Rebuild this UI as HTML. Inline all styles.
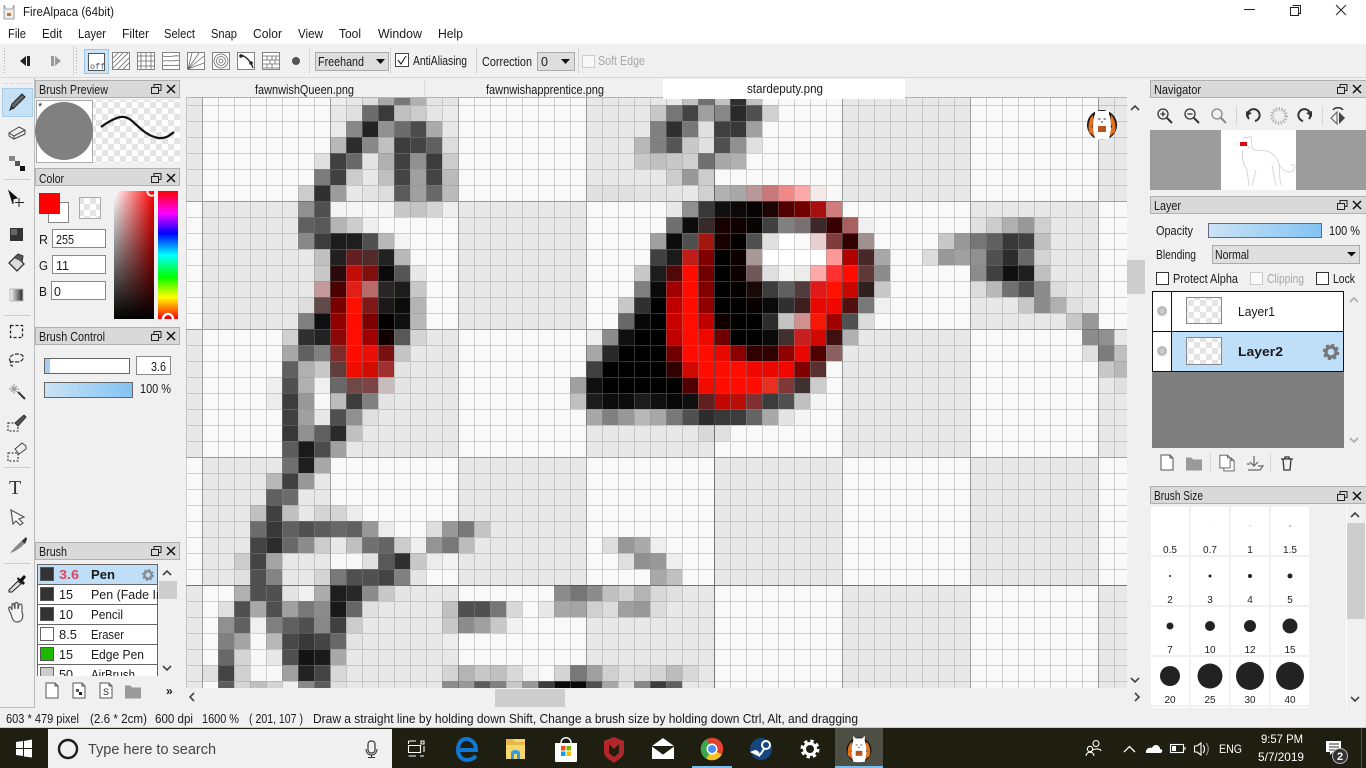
<!DOCTYPE html>
<html><head><meta charset="utf-8"><title>FireAlpaca</title>
<style>
html,body{margin:0;padding:0;width:1366px;height:768px;overflow:hidden;background:#f0f0f0}
svg{display:block;position:absolute;left:0;top:0}
text{font-family:"Liberation Sans",sans-serif;font-size:12.5px;fill:#1a1a1a;white-space:pre}
#c rect{width:16px;height:16px}
.h{fill:#d9d9d9;stroke:#b0b0b0}
.g text,text.g{fill:#a8a8a8}
.ln{stroke:#333;fill:none}
.mn{font-size:10px;fill:#222}
</style></head><body>
<svg width="1366" height="768" viewBox="0 0 1366 768" xmlns="http://www.w3.org/2000/svg">
<defs>
<pattern id="bgp" patternUnits="userSpaceOnUse" x="202" y="201" width="256" height="256"><rect width="256" height="256" fill="#f9f9f9"/><rect width="128" height="128" fill="#e8e8e8"/><rect x="128" y="128" width="128" height="128" fill="#e8e8e8"/></pattern>
<pattern id="gmin" patternUnits="userSpaceOnUse" x="202" y="201" width="16" height="16"><rect width="1" height="16" fill="#8c8c8c" fill-opacity=".38"/><rect x="1" width="15" height="1" fill="#8c8c8c" fill-opacity=".38"/></pattern>
<pattern id="gmaj" patternUnits="userSpaceOnUse" x="202" y="201" width="128" height="128"><rect width="1" height="128" fill="#b0b0b0"/><rect x="1" width="127" height="1" fill="#b0b0b0"/></pattern>
<pattern id="ck" patternUnits="userSpaceOnUse" width="12" height="12"><rect width="12" height="12" fill="#fff"/><rect width="6" height="6" fill="#e4e4e4"/><rect x="6" y="6" width="6" height="6" fill="#e4e4e4"/></pattern>
<linearGradient id="op" x1="0" x2="1" y1="0" y2="0"><stop offset="0" stop-color="#cbe3f5"/><stop offset="1" stop-color="#82c3f3"/></linearGradient>
<linearGradient id="hue" x1="0" x2="0" y1="0" y2="1"><stop offset="0" stop-color="#f00"/><stop offset=".17" stop-color="#f0f"/><stop offset=".33" stop-color="#00f"/><stop offset=".5" stop-color="#0ff"/><stop offset=".67" stop-color="#0f0"/><stop offset=".83" stop-color="#ff0"/><stop offset="1" stop-color="#f00"/></linearGradient>
<linearGradient id="sw" x1="0" x2="1" y1="0" y2="0"><stop offset="0" stop-color="#fff"/><stop offset="1" stop-color="#f00"/></linearGradient>
<linearGradient id="sb" x1="0" x2="0" y1="0" y2="1"><stop offset="0" stop-color="#000" stop-opacity="0"/><stop offset="1" stop-color="#000"/></linearGradient>
<linearGradient id="gd" x1="0" x2="1" y1="0" y2="0"><stop offset="0" stop-color="#fff"/><stop offset="1" stop-color="#222"/></linearGradient>
<clipPath id="cv"><rect x="186" y="98" width="941" height="590"/></clipPath>
<clipPath id="bl"><rect x="37" y="564" width="121" height="112"/></clipPath>
<g id="rs"><rect x="3" y=".5" width="7" height="6" fill="none" stroke="#222"/><rect x=".5" y="3.5" width="7" height="6" fill="#d9d9d9" stroke="#222"/></g>
<path id="xx" d="M0 0L8 8M8 0L0 8" stroke="#111" stroke-width="1.5" fill="none"/>
<g id="gear"><circle r="5" fill="none" stroke="#777" stroke-width="3.2"/><circle r="7" fill="none" stroke="#777" stroke-width="2.6" stroke-dasharray="3 2.5"/></g>
<path id="up" d="M-4 2L0-2L4 2" fill="none" stroke="#444" stroke-width="1.6"/>
<path id="dn" d="M-4-2L0 2L4-2" fill="none" stroke="#444" stroke-width="1.6"/>
<g id="lg"><circle r="15" fill="#111"/><path d="M-13 7C-15-2-11-9-9-10L-8-3L-10 2L-7 5L-7 12ZM13 7C15-2 11-9 9-10L8-3L10 2L7 5L7 12Z" fill="#e2701c"/><path d="M-7 14L-9 4C-9-4-8-9-7-11L-7-17L-4-14H4L7-17L7-11C8-9 9-4 9 4L7 14C3 15-3 15-7 14Z" fill="#fff"/><rect x="-4" y="1" width="8" height="6" fill="#b3561f"/><path d="M-4-6h2.500M1.500-6h2.500M-1 -3h2" stroke="#333"/></g>
<g id="doc"><path d="M-6-8H3L6-5V7H-6Z" fill="#fff" stroke="#555"/><path d="M3-8V-5H6" fill="none" stroke="#555"/></g>
<path id="fold" d="M-7.500-6H-3L-1-4H7.500V6H-7.500Z" fill="#9a9a9a" stroke="#999"/>
</defs>

<!-- title + menu -->
<rect width="1366" height="44" fill="#fff"/>
<g transform="translate(9 12)"><path d="M-5-7L-3-3L3-3L5-7L5 7L-5 7Z" fill="#eee" stroke="#888" stroke-width=".8"/><rect x="-2" y="1" width="4" height="3" fill="#d3792d"/></g>
<text x="23" y="16" textLength="91" lengthAdjust="spacingAndGlyphs">FireAlpaca (64bit)</text>
<rect x="1244" y="9" width="11" height="1" fill="#222"/>
<g fill="none" stroke="#222"><rect x="1290.5" y="7.5" width="8" height="8" fill="#fff"/><path d="M1292.5 5.5H1300.5V13.5H1298.5"/><path d="M1336 5L1346 15M1346 5L1336 15"/></g>
<g>
<text x="8" y="38" textLength="18" lengthAdjust="spacingAndGlyphs">File</text>
<text x="42" y="38" textLength="20" lengthAdjust="spacingAndGlyphs">Edit</text>
<text x="78" y="38" textLength="28" lengthAdjust="spacingAndGlyphs">Layer</text>
<text x="122" y="38" textLength="27" lengthAdjust="spacingAndGlyphs">Filter</text>
<text x="164" y="38" textLength="31" lengthAdjust="spacingAndGlyphs">Select</text>
<text x="211" y="38" textLength="26" lengthAdjust="spacingAndGlyphs">Snap</text>
<text x="253" y="38" textLength="29" lengthAdjust="spacingAndGlyphs">Color</text>
<text x="298" y="38" textLength="25" lengthAdjust="spacingAndGlyphs">View</text>
<text x="339" y="38" textLength="22" lengthAdjust="spacingAndGlyphs">Tool</text>
<text x="378" y="38" textLength="44" lengthAdjust="spacingAndGlyphs">Window</text>
<text x="438" y="38" textLength="25" lengthAdjust="spacingAndGlyphs">Help</text>
</g>

<!-- toolbar -->
<rect y="44" width="1366" height="34" fill="#f0f0f0"/>
<rect y="77" width="1366" height="1" fill="#d8d8d8"/>
<path d="M4.5 48V74M76.5 48V74" stroke="#aaa" stroke-dasharray="1 2"/>
<path d="M73.5 46V76M309.5 48V74M390.5 48V74M476.5 48V74M578.5 48V74" stroke="#d4d4d4"/>
<path d="M26 56V66L20 61ZM27 56H30V66H27Z" fill="#222"/>
<path d="M51 56H54V66H51ZM55 56L61 61L55 66Z" fill="#999"/>
<rect x="84.5" y="49.5" width="24" height="24" fill="#cce4f7" stroke="#9cc5e8"/>
<rect x="88.5" y="53.5" width="16" height="17" fill="#fff" stroke="#555"/>
<text x="90" y="69" style="font-family:'Liberation Mono',monospace;font-size:8.5px;fill:#456">off</text>
<g stroke="#666" fill="#fff" stroke-width=".8">
<rect x="112.5" y="52.5" width="17" height="17"/><path d="M113 58L118 53M113 63L123 53M113 68L128 53M118 69L129 58M123 69L129 63" fill="none"/>
<rect x="137.5" y="52.5" width="17" height="17"/><path d="M141 53V69M146 53V69M151 53V69M138 56H154M138 61H154M138 66H154" fill="none"/>
<rect x="162.5" y="52.5" width="17" height="17"/><path d="M163 56C168 58 174 55 179 56M163 61C168 60 174 62 179 60M163 66C168 64 174 67 179 65" fill="none"/>
<rect x="187.5" y="52.5" width="17" height="17"/><path d="M188 69L192 53M188 69L199 53M188 69L204 56M188 69L204 63" fill="none"/>
<rect x="212.5" y="52.5" width="17" height="17"/><circle cx="221" cy="61" r="7" fill="none"/><circle cx="221" cy="61" r="4.5" fill="none"/><circle cx="221" cy="61" r="2" fill="none"/>
<rect x="237.5" y="52.5" width="17" height="17"/>
<rect x="262.5" y="52.5" width="17" height="17"/><path d="M263 56H279M263 60H279M263 64H279M263 68H279M267 56V60M272 56V60M276 56V60M270 60V64M275 60V64M267 64V68M272 64V68" fill="none"/>
</g>
<path d="M240 55C246 56 250 60 253 68" fill="none" stroke="#333" stroke-width="1.4"/><circle cx="241" cy="56" r="1.8" fill="#222"/><circle cx="251" cy="63" r="1.8" fill="#222"/>
<circle cx="296" cy="61" r="4" fill="#555"/>
<rect x="315.5" y="52.5" width="73" height="18" fill="#dedede" stroke="#aaa"/>
<text x="318" y="66" textLength="46" lengthAdjust="spacingAndGlyphs">Freehand</text>
<path d="M376 59H385L380.500 64Z" fill="#111"/>
<rect x="395.5" y="53.5" width="13" height="13" fill="#fff" stroke="#444"/><path d="M398 60L401 64L406 56" fill="none" stroke="#222" stroke-width="1.1"/>
<text x="413" y="65" textLength="54" lengthAdjust="spacingAndGlyphs">AntiAliasing</text>
<text x="482" y="66" textLength="50" lengthAdjust="spacingAndGlyphs">Correction</text>
<rect x="537.500" y="52.5" width="37" height="18" fill="#dedede" stroke="#aaa"/>
<text x="541" y="66">0</text>
<path d="M561 59H570L565.500 64Z" fill="#111"/>
<rect x="582.500" y="55.5" width="12" height="12" fill="#f8f8f8" stroke="#ccc"/>
<text class="g" x="598" y="65" textLength="47" lengthAdjust="spacingAndGlyphs">Soft Edge</text>

<!-- canvas -->
<g clip-path="url(#cv)">
<rect x="186" y="98" width="941" height="590" fill="url(#bgp)"/>
<g id="c">
<g transform="translate(0 89)"><rect x="330" fill="#eeeeee"/><rect x="346" fill="#e8e8e8"/><rect x="362" fill="#dddddd"/><rect x="378" fill="#a8a8a8"/><rect x="394" fill="#777777"/><rect x="410" fill="#b0b0b0"/><rect x="426" fill="#e5e5e5"/><rect x="442" fill="#e5e5e5"/><rect x="682" fill="#c0c0c0"/><rect x="698" fill="#707070"/><rect x="714" fill="#c0c0c0"/><rect x="730" fill="#303030"/><rect x="746" fill="#c0c0c0"/></g>
<g transform="translate(0 105)"><rect x="330" fill="#e8e8e8"/><rect x="346" fill="#e0e0e0"/><rect x="362" fill="#6c6c6c"/><rect x="378" fill="#3a3a3a"/><rect x="394" fill="#c0c0c0"/><rect x="410" fill="#cccccc"/><rect x="426" fill="#e5e5e5"/><rect x="442" fill="#ebebeb"/><rect x="650" fill="#c8c8c8"/><rect x="666" fill="#777777"/><rect x="682" fill="#444444"/><rect x="698" fill="#a0a0a0"/><rect x="714" fill="#888888"/><rect x="730" fill="#2a2a2a"/><rect x="746" fill="#505050"/><rect x="762" fill="#d0d0d0"/></g>
<g transform="translate(0 121)"><rect x="330" fill="#eaeaea"/><rect x="346" fill="#888888"/><rect x="362" fill="#222222"/><rect x="378" fill="#909090"/><rect x="394" fill="#6c6c6c"/><rect x="410" fill="#4c4c4c"/><rect x="426" fill="#aaaaaa"/><rect x="442" fill="#e8e8e8"/><rect x="650" fill="#808080"/><rect x="666" fill="#303030"/><rect x="682" fill="#777777"/><rect x="698" fill="#e0e0e0"/><rect x="714" fill="#404040"/><rect x="730" fill="#383838"/><rect x="746" fill="#a0a0a0"/></g>
<g transform="translate(0 137)"><rect x="330" fill="#b8b8b8"/><rect x="346" fill="#2c2c2c"/><rect x="362" fill="#888888"/><rect x="378" fill="#c0c0c0"/><rect x="394" fill="#3c3c3c"/><rect x="410" fill="#444444"/><rect x="426" fill="#606060"/><rect x="442" fill="#dddddd"/><rect x="634" fill="#b8b8b8"/><rect x="650" fill="#808080"/><rect x="666" fill="#555555"/><rect x="682" fill="#c8c8c8"/><rect x="698" fill="#e0e0e0"/><rect x="714" fill="#505050"/><rect x="730" fill="#909090"/><rect x="746" fill="#e0e0e0"/></g>
<g transform="translate(0 153)"><rect x="314" fill="#e0e0e0"/><rect x="330" fill="#404040"/><rect x="346" fill="#686868"/><rect x="362" fill="#e4e4e4"/><rect x="378" fill="#b0b0b0"/><rect x="394" fill="#404040"/><rect x="410" fill="#909090"/><rect x="426" fill="#3c3c3c"/><rect x="442" fill="#cccccc"/><rect x="634" fill="#c8c8c8"/><rect x="650" fill="#c0c0c0"/><rect x="666" fill="#c8c8c8"/><rect x="682" fill="#d0d0d0"/><rect x="698" fill="#707070"/><rect x="714" fill="#a8a8a8"/><rect x="730" fill="#b0b0b0"/></g>
<g transform="translate(0 169)"><rect x="314" fill="#7c7c7c"/><rect x="330" fill="#404040"/><rect x="346" fill="#cccccc"/><rect x="362" fill="#e8e8e8"/><rect x="378" fill="#bfbfbf"/><rect x="394" fill="#444444"/><rect x="410" fill="#a0a0a0"/><rect x="426" fill="#444444"/><rect x="442" fill="#bbbbbb"/><rect x="666" fill="#cccccc"/><rect x="682" fill="#989898"/><rect x="698" fill="#cccccc"/></g>
<g transform="translate(0 185)"><rect x="298" fill="#cccccc"/><rect x="314" fill="#303030"/><rect x="330" fill="#9c9c9c"/><rect x="346" fill="#e8e8e8"/><rect x="362" fill="#e4e4e4"/><rect x="378" fill="#dddddd"/><rect x="394" fill="#5a5a5a"/><rect x="410" fill="#a0a0a0"/><rect x="426" fill="#686868"/><rect x="442" fill="#bbbbbb"/><rect x="586" fill="#e0e0e0"/><rect x="602" fill="#e0e0e0"/><rect x="618" fill="#e0e0e0"/><rect x="634" fill="#e4e4e4"/><rect x="650" fill="#e4e4e4"/><rect x="666" fill="#e4e4e4"/><rect x="682" fill="#e8e8e8"/><rect x="698" fill="#d0d0d0"/><rect x="714" fill="#b0b0b0"/><rect x="730" fill="#a8a8a8"/><rect x="746" fill="#b89898"/><rect x="762" fill="#c87878"/><rect x="778" fill="#f08888"/><rect x="794" fill="#ffa8a8"/><rect x="810" fill="#f4e8e8"/><rect x="826" fill="#f8f8f8"/></g>
<g transform="translate(0 201)"><rect x="298" fill="#909090"/><rect x="314" fill="#505050"/><rect x="330" fill="#f4f4f4"/><rect x="346" fill="#f6f6f6"/><rect x="362" fill="#f6f6f6"/><rect x="378" fill="#f4f4f4"/><rect x="394" fill="#c8c8c8"/><rect x="410" fill="#c4c4c4"/><rect x="426" fill="#d4d4d4"/><rect x="442" fill="#eeeeee"/><rect x="666" fill="#e8e8e8"/><rect x="682" fill="#909090"/><rect x="698" fill="#383838"/><rect x="714" fill="#101010"/><rect x="730" fill="#0c0808"/><rect x="746" fill="#080404"/><rect x="762" fill="#1c0404"/><rect x="778" fill="#500000"/><rect x="794" fill="#700000"/><rect x="810" fill="#a81010"/><rect x="826" fill="#d07c7c"/></g>
<g transform="translate(0 217)"><rect x="298" fill="#606060"/><rect x="314" fill="#585858"/><rect x="330" fill="#b4b4b4"/><rect x="346" fill="#cccccc"/><rect x="362" fill="#eeeeee"/><rect x="666" fill="#707070"/><rect x="682" fill="#0c0c0c"/><rect x="698" fill="#382a2a"/><rect x="714" fill="#180000"/><rect x="730" fill="#100000"/><rect x="746" fill="#080404"/><rect x="762" fill="#404040"/><rect x="778" fill="#808080"/><rect x="794" fill="#787070"/><rect x="810" fill="#3c2828"/><rect x="826" fill="#380000"/><rect x="842" fill="#a86060"/><rect x="858" fill="#f0f0f0"/><rect x="970" fill="#e0e0e0"/><rect x="986" fill="#cccccc"/><rect x="1002" fill="#b0b0b0"/><rect x="1018" fill="#989898"/><rect x="1034" fill="#d0d0d0"/></g>
<g transform="translate(0 233)"><rect x="298" fill="#888888"/><rect x="314" fill="#3c3c3c"/><rect x="330" fill="#1c1c1c"/><rect x="346" fill="#1e1e1e"/><rect x="362" fill="#505050"/><rect x="378" fill="#b8b8b8"/><rect x="394" fill="#f4f4f4"/><rect x="650" fill="#a0a0a0"/><rect x="666" fill="#0c0c0c"/><rect x="682" fill="#505050"/><rect x="698" fill="#a01810"/><rect x="714" fill="#180000"/><rect x="730" fill="#040000"/><rect x="746" fill="#505050"/><rect x="762" fill="#e0e0e0"/><rect x="778" fill="#ffffff"/><rect x="794" fill="#fafafa"/><rect x="810" fill="#e8d0d0"/><rect x="826" fill="#803c3c"/><rect x="842" fill="#300000"/><rect x="858" fill="#a09090"/><rect x="938" fill="#c8c8c8"/><rect x="954" fill="#989898"/><rect x="970" fill="#767676"/><rect x="986" fill="#606060"/><rect x="1002" fill="#383838"/><rect x="1018" fill="#404040"/><rect x="1034" fill="#c0c0c0"/></g>
<g transform="translate(0 249)"><rect x="298" fill="#e8e8e8"/><rect x="314" fill="#c0c0c0"/><rect x="330" fill="#241f1f"/><rect x="346" fill="#642020"/><rect x="362" fill="#522a2a"/><rect x="378" fill="#222222"/><rect x="394" fill="#b8b8b8"/><rect x="650" fill="#404040"/><rect x="666" fill="#1a1a1a"/><rect x="682" fill="#c01c18"/><rect x="698" fill="#800000"/><rect x="714" fill="#000000"/><rect x="730" fill="#0c0000"/><rect x="746" fill="#a89898"/><rect x="762" fill="#ffffff"/><rect x="778" fill="#ffffff"/><rect x="794" fill="#ffffff"/><rect x="810" fill="#ffffff"/><rect x="826" fill="#ff9999"/><rect x="842" fill="#b00000"/><rect x="858" fill="#482828"/><rect x="874" fill="#a8a8a8"/><rect x="922" fill="#dcdcdc"/><rect x="938" fill="#989898"/><rect x="954" fill="#a0a0a0"/><rect x="970" fill="#909090"/><rect x="986" fill="#505050"/><rect x="1002" fill="#2c2c2c"/><rect x="1018" fill="#686868"/><rect x="1034" fill="#d4d4d4"/></g>
<g transform="translate(0 265)"><rect x="314" fill="#c8c8c8"/><rect x="330" fill="#2a0a0a"/><rect x="346" fill="#c00d08"/><rect x="362" fill="#801010"/><rect x="378" fill="#0a0a0a"/><rect x="394" fill="#555555"/><rect x="410" fill="#e8e8e8"/><rect x="634" fill="#c8c8c8"/><rect x="650" fill="#1c1c1c"/><rect x="666" fill="#500808"/><rect x="682" fill="#ff0d00"/><rect x="698" fill="#700000"/><rect x="714" fill="#000000"/><rect x="730" fill="#0c0000"/><rect x="746" fill="#705858"/><rect x="762" fill="#e0e0e0"/><rect x="778" fill="#f4f4f4"/><rect x="794" fill="#ececec"/><rect x="810" fill="#ffa8a8"/><rect x="826" fill="#ff3030"/><rect x="842" fill="#ff0d00"/><rect x="858" fill="#603838"/><rect x="874" fill="#8c8c8c"/><rect x="970" fill="#8c8c8c"/><rect x="986" fill="#404040"/><rect x="1002" fill="#101010"/><rect x="1018" fill="#1e1e1e"/><rect x="1034" fill="#c0c0c0"/></g>
<g transform="translate(0 281)"><rect x="298" fill="#e8e8e8"/><rect x="314" fill="#c49a9a"/><rect x="330" fill="#4a0000"/><rect x="346" fill="#e02018"/><rect x="362" fill="#b86a6a"/><rect x="378" fill="#2a2525"/><rect x="394" fill="#1c1c1c"/><rect x="410" fill="#c8c8c8"/><rect x="634" fill="#808080"/><rect x="650" fill="#0a0a0a"/><rect x="666" fill="#a00000"/><rect x="682" fill="#ff0d00"/><rect x="698" fill="#800000"/><rect x="714" fill="#000000"/><rect x="730" fill="#040000"/><rect x="746" fill="#180808"/><rect x="762" fill="#3c3c3c"/><rect x="778" fill="#606060"/><rect x="794" fill="#503c3c"/><rect x="810" fill="#e01818"/><rect x="826" fill="#ff1200"/><rect x="842" fill="#c80800"/><rect x="858" fill="#302020"/><rect x="874" fill="#c8c8c8"/><rect x="970" fill="#dcdcdc"/><rect x="986" fill="#b8b8b8"/><rect x="1002" fill="#707070"/><rect x="1018" fill="#505050"/><rect x="1034" fill="#8c8c8c"/><rect x="1050" fill="#dcdcdc"/></g>
<g transform="translate(0 297)"><rect x="298" fill="#dddddd"/><rect x="314" fill="#604a4a"/><rect x="330" fill="#7a0000"/><rect x="346" fill="#ff0f00"/><rect x="362" fill="#801818"/><rect x="378" fill="#1c1818"/><rect x="394" fill="#0c0c0c"/><rect x="410" fill="#b4b4b4"/><rect x="618" fill="#c8c8c8"/><rect x="634" fill="#303030"/><rect x="650" fill="#000000"/><rect x="666" fill="#c00000"/><rect x="682" fill="#ff0d00"/><rect x="698" fill="#900000"/><rect x="714" fill="#000000"/><rect x="730" fill="#000000"/><rect x="746" fill="#080000"/><rect x="762" fill="#0a0a0a"/><rect x="778" fill="#303030"/><rect x="794" fill="#3c2020"/><rect x="810" fill="#e80800"/><rect x="826" fill="#f00800"/><rect x="842" fill="#501010"/><rect x="858" fill="#787878"/><rect x="874" fill="#f0f0f0"/><rect x="1018" fill="#c8c8c8"/><rect x="1034" fill="#8c8c8c"/><rect x="1050" fill="#b0b0b0"/><rect x="1066" fill="#e0e0e0"/></g>
<g transform="translate(0 313)"><rect x="298" fill="#808080"/><rect x="314" fill="#0f0f0f"/><rect x="330" fill="#900000"/><rect x="346" fill="#ff0d00"/><rect x="362" fill="#7c0000"/><rect x="378" fill="#050000"/><rect x="394" fill="#101010"/><rect x="410" fill="#b8b8b8"/><rect x="618" fill="#686868"/><rect x="634" fill="#080808"/><rect x="650" fill="#000000"/><rect x="666" fill="#c80000"/><rect x="682" fill="#ff0d00"/><rect x="698" fill="#c00000"/><rect x="714" fill="#100000"/><rect x="730" fill="#000000"/><rect x="746" fill="#000000"/><rect x="762" fill="#2c2c2c"/><rect x="778" fill="#c4c4c4"/><rect x="794" fill="#d09090"/><rect x="810" fill="#f81808"/><rect x="826" fill="#a00000"/><rect x="842" fill="#505050"/><rect x="858" fill="#dcdcdc"/><rect x="1066" fill="#c8c8c8"/><rect x="1082" fill="#989898"/></g>
<g transform="translate(0 329)"><rect x="282" fill="#d0d0d0"/><rect x="298" fill="#303030"/><rect x="314" fill="#222222"/><rect x="330" fill="#8c0808"/><rect x="346" fill="#ff0d00"/><rect x="362" fill="#a00000"/><rect x="378" fill="#100000"/><rect x="394" fill="#585858"/><rect x="410" fill="#d4d4d4"/><rect x="586" fill="#eeeeee"/><rect x="602" fill="#8c8c8c"/><rect x="618" fill="#101010"/><rect x="634" fill="#000000"/><rect x="650" fill="#000000"/><rect x="666" fill="#c00000"/><rect x="682" fill="#ff0d00"/><rect x="698" fill="#f00800"/><rect x="714" fill="#700000"/><rect x="730" fill="#000000"/><rect x="746" fill="#000000"/><rect x="762" fill="#0a0a0a"/><rect x="778" fill="#403030"/><rect x="794" fill="#c82020"/><rect x="810" fill="#d00800"/><rect x="826" fill="#401010"/><rect x="842" fill="#b0b0b0"/><rect x="1082" fill="#8c8c8c"/><rect x="1098" fill="#909090"/></g>
<g transform="translate(0 345)"><rect x="282" fill="#a8a8a8"/><rect x="298" fill="#606060"/><rect x="314" fill="#808080"/><rect x="330" fill="#802a2a"/><rect x="346" fill="#ff0d00"/><rect x="362" fill="#e81008"/><rect x="378" fill="#7a1010"/><rect x="394" fill="#c4c4c4"/><rect x="586" fill="#a8a8a8"/><rect x="602" fill="#282828"/><rect x="618" fill="#000000"/><rect x="634" fill="#000000"/><rect x="650" fill="#000000"/><rect x="666" fill="#700000"/><rect x="682" fill="#ff0d00"/><rect x="698" fill="#ff0d00"/><rect x="714" fill="#e80800"/><rect x="730" fill="#8c0000"/><rect x="746" fill="#300000"/><rect x="762" fill="#300000"/><rect x="778" fill="#900000"/><rect x="794" fill="#e80800"/><rect x="810" fill="#500000"/><rect x="826" fill="#8c6060"/><rect x="1082" fill="#e0e0e0"/><rect x="1098" fill="#7c7c7c"/><rect x="1114" fill="#c0c0c0"/></g>
<g transform="translate(0 361)"><rect x="282" fill="#606060"/><rect x="298" fill="#b0b0b0"/><rect x="314" fill="#c8c8c8"/><rect x="330" fill="#603c3c"/><rect x="346" fill="#f00d00"/><rect x="362" fill="#d00d00"/><rect x="378" fill="#a03030"/><rect x="394" fill="#e4e4e4"/><rect x="586" fill="#404040"/><rect x="602" fill="#000000"/><rect x="618" fill="#000000"/><rect x="634" fill="#000000"/><rect x="650" fill="#000000"/><rect x="666" fill="#300000"/><rect x="682" fill="#d00800"/><rect x="698" fill="#ff0d00"/><rect x="714" fill="#ff0d00"/><rect x="730" fill="#ff0d00"/><rect x="746" fill="#f00800"/><rect x="762" fill="#e80800"/><rect x="778" fill="#f00800"/><rect x="794" fill="#800000"/><rect x="810" fill="#583030"/><rect x="1098" fill="#c8c8c8"/><rect x="1114" fill="#b8b8b8"/></g>
<g transform="translate(0 377)"><rect x="266" fill="#efefef"/><rect x="282" fill="#505050"/><rect x="298" fill="#b0b0b0"/><rect x="314" fill="#f0f0f0"/><rect x="330" fill="#686868"/><rect x="346" fill="#704848"/><rect x="362" fill="#7c4444"/><rect x="378" fill="#c8bcbc"/><rect x="394" fill="#e4e4e4"/><rect x="570" fill="#a0a0a0"/><rect x="586" fill="#101010"/><rect x="602" fill="#000000"/><rect x="618" fill="#000000"/><rect x="634" fill="#000000"/><rect x="650" fill="#000000"/><rect x="666" fill="#000000"/><rect x="682" fill="#500000"/><rect x="698" fill="#f00d00"/><rect x="714" fill="#ff0d00"/><rect x="730" fill="#ff0d00"/><rect x="746" fill="#ff0d00"/><rect x="762" fill="#e83020"/><rect x="778" fill="#803838"/><rect x="794" fill="#403030"/><rect x="810" fill="#cccccc"/><rect x="1098" fill="#e8e8e8"/><rect x="1114" fill="#e0e0e0"/></g>
<g transform="translate(0 393)"><rect x="266" fill="#ececec"/><rect x="282" fill="#3c3c3c"/><rect x="298" fill="#989898"/><rect x="314" fill="#f8f8f8"/><rect x="330" fill="#bcbcbc"/><rect x="346" fill="#3c3c3c"/><rect x="362" fill="#808080"/><rect x="378" fill="#e4e4e4"/><rect x="570" fill="#c0c0c0"/><rect x="586" fill="#1c1c1c"/><rect x="602" fill="#0c0c0c"/><rect x="618" fill="#0c0c0c"/><rect x="634" fill="#1c1c1c"/><rect x="650" fill="#101010"/><rect x="666" fill="#080808"/><rect x="682" fill="#101010"/><rect x="698" fill="#602020"/><rect x="714" fill="#c00800"/><rect x="730" fill="#b81008"/><rect x="746" fill="#803030"/><rect x="762" fill="#3c3c3c"/><rect x="778" fill="#505050"/><rect x="794" fill="#c0c0c0"/><rect x="810" fill="#f4f4f4"/></g>
<g transform="translate(0 409)"><rect x="282" fill="#404040"/><rect x="298" fill="#a0a0a0"/><rect x="314" fill="#e8e8e8"/><rect x="330" fill="#505050"/><rect x="346" fill="#909090"/><rect x="362" fill="#e0e0e0"/><rect x="586" fill="#a8a8a8"/><rect x="602" fill="#808080"/><rect x="618" fill="#989898"/><rect x="634" fill="#b8b8b8"/><rect x="650" fill="#a8a8a8"/><rect x="666" fill="#787878"/><rect x="682" fill="#505050"/><rect x="698" fill="#2c2c2c"/><rect x="714" fill="#383838"/><rect x="730" fill="#3c3c3c"/><rect x="746" fill="#646464"/><rect x="762" fill="#a8a8a8"/><rect x="778" fill="#e4e4e4"/><rect x="794" fill="#f4f4f4"/></g>
<g transform="translate(0 425)"><rect x="282" fill="#383838"/><rect x="298" fill="#909090"/><rect x="314" fill="#606060"/><rect x="330" fill="#2a2a2a"/><rect x="346" fill="#c0c0c0"/><rect x="698" fill="#d8d8d8"/><rect x="714" fill="#e0e0e0"/></g>
<g transform="translate(0 441)"><rect x="282" fill="#5c5c5c"/><rect x="298" fill="#1a1a1a"/><rect x="314" fill="#4c4c4c"/><rect x="330" fill="#a0a0a0"/></g>
<g transform="translate(0 457)"><rect x="282" fill="#707070"/><rect x="298" fill="#1e1e1e"/><rect x="314" fill="#a8a8a8"/></g>
<g transform="translate(0 473)"><rect x="266" fill="#b8b8b8"/><rect x="282" fill="#404040"/><rect x="298" fill="#989898"/><rect x="314" fill="#e8e8e8"/></g>
<g transform="translate(0 489)"><rect x="266" fill="#606060"/><rect x="282" fill="#6c6c6c"/><rect x="298" fill="#e8e8e8"/><rect x="314" fill="#e8e8e8"/></g>
<g transform="translate(0 505)"><rect x="250" fill="#c0c0c0"/><rect x="266" fill="#404040"/><rect x="282" fill="#c0c0c0"/><rect x="298" fill="#e8e8e8"/><rect x="314" fill="#d4d4d4"/><rect x="330" fill="#d4d4d4"/><rect x="346" fill="#ececec"/></g>
<g transform="translate(0 521)"><rect x="250" fill="#6c6c6c"/><rect x="266" fill="#383838"/><rect x="282" fill="#606060"/><rect x="298" fill="#505050"/><rect x="314" fill="#5c5c5c"/><rect x="330" fill="#686868"/><rect x="346" fill="#606060"/><rect x="362" fill="#989898"/><rect x="378" fill="#ececec"/><rect x="426" fill="#dddddd"/><rect x="442" fill="#989898"/><rect x="458" fill="#787878"/><rect x="474" fill="#c4c4c4"/></g>
<g transform="translate(0 537)"><rect x="250" fill="#444444"/><rect x="266" fill="#2c2c2c"/><rect x="282" fill="#686868"/><rect x="298" fill="#8c8c8c"/><rect x="314" fill="#cccccc"/><rect x="330" fill="#e8e8e8"/><rect x="346" fill="#c0c0c0"/><rect x="362" fill="#707070"/><rect x="378" fill="#646464"/><rect x="394" fill="#cccccc"/><rect x="410" fill="#eeeeee"/><rect x="426" fill="#949494"/><rect x="442" fill="#787878"/><rect x="458" fill="#bcbcbc"/><rect x="602" fill="#dddddd"/><rect x="618" fill="#989898"/><rect x="634" fill="#aaaaaa"/><rect x="650" fill="#eeeeee"/></g>
<g transform="translate(0 553)"><rect x="234" fill="#cccccc"/><rect x="250" fill="#444444"/><rect x="266" fill="#a4a4a4"/><rect x="282" fill="#e8e8e8"/><rect x="298" fill="#e8e8e8"/><rect x="314" fill="#e8e8e8"/><rect x="330" fill="#f8f8f8"/><rect x="346" fill="#f8f8f8"/><rect x="362" fill="#e0e0e0"/><rect x="378" fill="#585858"/><rect x="394" fill="#303030"/><rect x="410" fill="#c8c8c8"/><rect x="426" fill="#ececec"/><rect x="442" fill="#f2f2f2"/><rect x="618" fill="#e0e0e0"/><rect x="634" fill="#909090"/><rect x="650" fill="#989898"/><rect x="666" fill="#eeeeee"/></g>
<g transform="translate(0 569)"><rect x="234" fill="#e0e0e0"/><rect x="250" fill="#505050"/><rect x="266" fill="#848484"/><rect x="282" fill="#e8e8e8"/><rect x="298" fill="#e8e8e8"/><rect x="314" fill="#d4d4d4"/><rect x="330" fill="#787878"/><rect x="346" fill="#505050"/><rect x="362" fill="#505050"/><rect x="378" fill="#444444"/><rect x="394" fill="#808080"/><rect x="410" fill="#e4e4e4"/><rect x="650" fill="#a8a8a8"/><rect x="666" fill="#c0c0c0"/></g>
<g transform="translate(0 585)"><rect x="234" fill="#b0b0b0"/><rect x="250" fill="#505050"/><rect x="266" fill="#505050"/><rect x="282" fill="#e4e4e4"/><rect x="298" fill="#f0f0f0"/><rect x="314" fill="#acacac"/><rect x="330" fill="#1e1e1e"/><rect x="346" fill="#282828"/><rect x="362" fill="#8c8c8c"/><rect x="378" fill="#c8c8c8"/><rect x="394" fill="#e4e4e4"/><rect x="554" fill="#8c8c8c"/><rect x="570" fill="#767676"/><rect x="586" fill="#8c8c8c"/><rect x="602" fill="#c0c0c0"/><rect x="618" fill="#d0d0d0"/><rect x="634" fill="#b4b4b4"/><rect x="650" fill="#d8d8d8"/><rect x="666" fill="#e0e0e0"/></g>
<g transform="translate(0 601)"><rect x="218" fill="#e0e0e0"/><rect x="234" fill="#505050"/><rect x="250" fill="#a8a8a8"/><rect x="266" fill="#505050"/><rect x="282" fill="#a0a0a0"/><rect x="298" fill="#787878"/><rect x="314" fill="#8c8c8c"/><rect x="330" fill="#181818"/><rect x="346" fill="#666666"/><rect x="362" fill="#e0e0e0"/><rect x="442" fill="#c0c0c0"/><rect x="458" fill="#505050"/><rect x="474" fill="#505050"/><rect x="490" fill="#767676"/><rect x="506" fill="#d8d8d8"/><rect x="538" fill="#e8e8e8"/><rect x="554" fill="#a8a8a8"/><rect x="570" fill="#a4a4a4"/><rect x="586" fill="#d0d0d0"/><rect x="602" fill="#dcdcdc"/><rect x="618" fill="#a0a0a0"/><rect x="634" fill="#989898"/><rect x="650" fill="#dcdcdc"/></g>
<g transform="translate(0 617)"><rect x="218" fill="#909090"/><rect x="234" fill="#606060"/><rect x="250" fill="#f0f0f0"/><rect x="266" fill="#808080"/><rect x="282" fill="#606060"/><rect x="298" fill="#505050"/><rect x="314" fill="#888888"/><rect x="330" fill="#404040"/><rect x="346" fill="#cccccc"/><rect x="442" fill="#c8c8c8"/><rect x="458" fill="#8c8c8c"/><rect x="474" fill="#a0a0a0"/><rect x="490" fill="#c8c8c8"/><rect x="506" fill="#f0f0f0"/></g>
<g transform="translate(0 633)"><rect x="218" fill="#808080"/><rect x="234" fill="#a4a4a4"/><rect x="250" fill="#f8f8f8"/><rect x="266" fill="#b8b8b8"/><rect x="282" fill="#484848"/><rect x="298" fill="#383838"/><rect x="314" fill="#444444"/><rect x="330" fill="#686868"/><rect x="346" fill="#e4e4e4"/><rect x="442" fill="#ececec"/></g>
<g transform="translate(0 649)"><rect x="218" fill="#686868"/><rect x="234" fill="#d4d4d4"/><rect x="250" fill="#f8f8f8"/><rect x="266" fill="#e8e8e8"/><rect x="282" fill="#505050"/><rect x="298" fill="#141414"/><rect x="314" fill="#1a1a1a"/><rect x="330" fill="#a8a8a8"/></g>
<g transform="translate(0 665)"><rect x="202" fill="#e0e0e0"/><rect x="218" fill="#444444"/><rect x="234" fill="#d0d0d0"/><rect x="250" fill="#f8f8f8"/><rect x="266" fill="#f8f8f8"/><rect x="282" fill="#a0a0a0"/><rect x="298" fill="#222222"/><rect x="314" fill="#444444"/><rect x="330" fill="#d8d8d8"/><rect x="442" fill="#d4d4d4"/><rect x="458" fill="#b4b4b4"/><rect x="474" fill="#c8c8c8"/><rect x="490" fill="#c0c0c0"/><rect x="506" fill="#d8d8d8"/><rect x="522" fill="#f0f0f0"/><rect x="554" fill="#d4d4d4"/><rect x="570" fill="#787878"/><rect x="586" fill="#a0a0a0"/><rect x="602" fill="#d0d0d0"/><rect x="618" fill="#e0e0e0"/><rect x="634" fill="#dcdcdc"/><rect x="650" fill="#d4d4d4"/><rect x="666" fill="#bcbcbc"/><rect x="682" fill="#d8d8d8"/></g>
<g transform="translate(0 681)"><rect x="218" fill="#5c5c5c"/><rect x="234" fill="#d4d4d4"/><rect x="250" fill="#c0c0c0"/><rect x="266" fill="#d4d4d4"/><rect x="282" fill="#f0f0f0"/><rect x="298" fill="#888888"/><rect x="314" fill="#5c5c5c"/><rect x="330" fill="#e0e0e0"/><rect x="442" fill="#8c8c8c"/><rect x="458" fill="#989898"/><rect x="474" fill="#5c5c5c"/><rect x="490" fill="#808080"/><rect x="506" fill="#c8c8c8"/><rect x="522" fill="#989898"/><rect x="538" fill="#3c3c3c"/><rect x="554" fill="#0a0a0a"/><rect x="570" fill="#0a0a0a"/><rect x="586" fill="#505050"/><rect x="602" fill="#a8a8a8"/><rect x="618" fill="#e0e0e0"/><rect x="634" fill="#888888"/><rect x="650" fill="#3c3c3c"/><rect x="666" fill="#606060"/></g>
</g>
<rect x="186" y="98" width="941" height="590" fill="url(#gmaj)" style="mix-blend-mode:multiply"/>
<rect x="714" y="98" width="1" height="590" fill="#a0a0a0" style="mix-blend-mode:multiply"/>
<rect x="186" y="585" width="941" height="1" fill="#a0a0a0" style="mix-blend-mode:multiply"/>
<rect x="186" y="98" width="941" height="590" fill="url(#gmin)"/>
<use href="#lg" x="1102" y="125"/>
</g>

<!-- tabs -->
<rect x="186" y="79" width="941" height="19" fill="#f0f0f0"/>
<rect x="186" y="97" width="941" height="1" fill="#b4b4b4"/>
<path d="M424.500 80V97" stroke="#dcdcdc"/>
<rect x="663" y="79" width="242" height="20" fill="#fff"/>
<text x="255" y="94" textLength="99" lengthAdjust="spacingAndGlyphs">fawnwishQueen.png</text>
<text x="486" y="94" textLength="118" lengthAdjust="spacingAndGlyphs">fawnwishapprentice.png</text>
<text x="747" y="93" textLength="76" lengthAdjust="spacingAndGlyphs">stardeputy.png</text>

<!-- canvas scrollbars -->
<rect x="1127" y="98" width="23" height="610" fill="#f0f0f0"/>
<rect x="186" y="688" width="964" height="20" fill="#f0f0f0"/>
<use href="#up" x="1135" y="108"/><use href="#dn" x="1135" y="680"/>
<rect x="1127" y="260" width="18" height="34" fill="#cdcdcd"/>
<rect x="495" y="689" width="70" height="18" fill="#cdcdcd"/>
<path d="M194 693L190 697L194 701M1135 693L1139 697L1135 701" fill="none" stroke="#444" stroke-width="1.600"/>

<!-- left column -->
<rect y="78" width="186" height="630" fill="#f0f0f0"/>
<rect x="34" y="78" width="1" height="630" fill="#bdbdbd"/>
<path d="M4 83.500H32" stroke="#bbb" stroke-dasharray="1 2"/>
<rect y="707" width="35" height="1" fill="#bdbdbd"/>
<rect x="2.500" y="88.500" width="30" height="28" fill="#c6e0f5" stroke="#a8cdea"/>
<path d="M5 180.500H30M5 316.500H30M5 468.500H30M5 564.500H30" stroke="#ccc" transform="translate(0 -1)"/>
<path d="M10 110L12 104L22 94L25 97L15 107Z" fill="#666" stroke="#222"/><path d="M11 106L14 109" stroke="#222"/>
<path d="M9 133L19 127L25 130V134L14 139L9 136Z" fill="#eee" stroke="#444"/><path d="M9 133L14 136L25 130M14 136V139" fill="none" stroke="#444"/>
<rect x="9" y="156" width="6" height="5" fill="#888"/><rect x="15" y="161" width="5" height="5" fill="#555"/><rect x="20" y="166" width="5" height="5" fill="#111"/>
<path d="M9 191L17 198L13 199L13 204Z" fill="#111" stroke="#111"/><path d="M19 198V207M15 202.500H24" stroke="#222"/>
<rect x="10" y="228" width="13" height="13" fill="#333"/><rect x="11" y="229" width="6" height="6" fill="#666"/>
<path d="M9 263L16 256L24 264L17 271Z" fill="#ddd" stroke="#333" stroke-width="1.300"/><path d="M14 258L18 254L23 256L22 262" fill="#555" stroke="#333"/>
<rect x="10" y="289" width="13" height="12" fill="url(#gd)" stroke="#bbb"/>
<rect x="10.500" y="325.500" width="12" height="12" fill="none" stroke="#222" stroke-width="1.300" stroke-dasharray="3 2"/>
<path d="M11 362C7 358 12 354 17 354C24 354 25 358 21 361C18 363 14 361 11 362C9 364 11 366 13 366" fill="none" stroke="#333" stroke-width="1.300" stroke-dasharray="4 1.500"/>
<path d="M18 392L25 399" stroke="#333" stroke-width="2"/><path d="M14 384V394M9 389H19M11 386L17 392M17 386L11 392" stroke="#999"/>
<rect x="8" y="423" width="10" height="8" fill="none" stroke="#222" stroke-dasharray="2 1.500"/><path d="M15 423L24 415L26 417L18 426Z" fill="#555" stroke="#333"/>
<rect x="8" y="453" width="10" height="8" fill="none" stroke="#222" stroke-dasharray="2 1.500"/><path d="M15 449L22 443L26 446L26 449L19 454Z" fill="#eee" stroke="#444"/>
<text x="9" y="494" style="font-family:'Liberation Serif',serif;font-size:20px;fill:#333">T</text>
<path d="M11 510L24 517L19 519L23 523L20 525L16 521L13 524Z" fill="#f4f4f4" stroke="#555" stroke-width="1.200"/>
<path d="M10 553C14 548 20 542 26 537L27 539C24 546 17 551 10 553Z" fill="#888"/><path d="M22 541L26 537L27 539L25 544Z" fill="#333"/>
<path d="M9 590L18 581L21 584L12 592L9 592Z" fill="#ddd" stroke="#222"/><path d="M18 577L20 579L24 575L26 577L23 581L25 583L23 585L17 579Z" fill="#111"/>
<path d="M11 614L9 610C8 607 10 606 11 608L12 610L12 605C12 603 14 603 14 605L15 609V604C15 602 18 602 18 604L18 609L19 605C20 603 22 604 22 606L22 612C24 617 22 622 17 622C13 622 12 618 11 614Z" fill="#f4f4f4" stroke="#555" stroke-width="1.200"/>

<!-- Brush Preview -->
<rect class="h" x="35.500" y="80.500" width="144" height="17"/>
<text x="39" y="94" textLength="69" lengthAdjust="spacingAndGlyphs">Brush Preview</text>
<use href="#rs" x="151" y="84"/><use href="#xx" x="167" y="85"/>
<rect x="36.500" y="100.500" width="56" height="62" fill="#fff" stroke="#aaa"/>
<circle cx="64" cy="131" r="29" fill="#808080"/>
<text x="38" y="110" style="font-size:11px;fill:#333">*</text>
<rect x="93" y="100" width="87" height="63" fill="url(#ck)"/>
<path d="M101 127C108 122 118 116 124 117C134 118 140 134 158 138C166 139 170 135 174 132" fill="none" stroke="#111" stroke-width="2.200"/>

<!-- Color -->
<rect class="h" x="35.500" y="168.500" width="144" height="17"/>
<text x="39" y="183" textLength="25" lengthAdjust="spacingAndGlyphs">Color</text>
<use href="#rs" x="151" y="173"/><use href="#xx" x="167" y="174"/>
<rect x="48.500" y="202.500" width="20" height="20" fill="#fff" stroke="#888"/>
<rect x="39" y="193" width="21" height="21" fill="#ff0000"/>
<rect x="79.500" y="197.500" width="21" height="21" fill="url(#ck)" stroke="#aaa"/>
<text x="39" y="244" textLength="9" lengthAdjust="spacingAndGlyphs">R</text>
<rect x="52.500" y="229.500" width="53" height="18" fill="#fff" stroke="#888"/>
<text x="56" y="244" textLength="18" lengthAdjust="spacingAndGlyphs">255</text>
<text x="39" y="270" textLength="9" lengthAdjust="spacingAndGlyphs">G</text>
<rect x="52.500" y="255.500" width="53" height="18" fill="#fff" stroke="#888"/>
<text x="56" y="270">11</text>
<text x="39" y="296" textLength="8" lengthAdjust="spacingAndGlyphs">B</text>
<rect x="51.500" y="281.500" width="54" height="18" fill="#fff" stroke="#888"/>
<text x="54" y="296">0</text>
<rect x="114" y="191" width="40" height="128" fill="url(#sw)"/>
<rect x="114" y="191" width="40" height="128" fill="url(#sb)"/>
<rect x="158" y="191" width="20" height="128" fill="url(#hue)"/>
<path d="M147.500 191A4.200 4.200 0 0 0 154 195" fill="none" stroke="#fff" stroke-width="1.800"/>
<path d="M163 319A5 5 0 0 1 173 319" fill="#e00" stroke="#fff" stroke-width="2.400"/>

<!-- Brush Control -->
<rect class="h" x="35.500" y="327.500" width="144" height="17"/>
<text x="39" y="341" textLength="66" lengthAdjust="spacingAndGlyphs">Brush Control</text>
<use href="#rs" x="151" y="331"/><use href="#xx" x="167" y="332"/>
<rect x="44.500" y="358.500" width="85" height="15" fill="#fff" stroke="#666"/>
<rect x="45" y="359" width="5" height="14" fill="#a4cdf0"/>
<rect x="136.500" y="356.500" width="34" height="18" fill="#fff" stroke="#888"/>
<text x="151" y="371" textLength="15" lengthAdjust="spacingAndGlyphs">3.6</text>
<rect x="44.500" y="382.500" width="88" height="15" fill="url(#op)" stroke="#666"/>
<text x="140" y="393" textLength="31" lengthAdjust="spacingAndGlyphs">100 %</text>

<!-- Brush -->
<rect class="h" x="35.500" y="542.500" width="144" height="17"/>
<text x="39" y="556" textLength="28" lengthAdjust="spacingAndGlyphs">Brush</text>
<use href="#rs" x="151" y="546"/><use href="#xx" x="167" y="547"/>
<g clip-path="url(#bl)">
<rect x="37" y="564" width="121" height="120" fill="#fff"/>
<rect x="38" y="565" width="119" height="19" fill="#bfdff8"/>
<path d="M37.500 564V684M157.500 564V684M37 564.500H158M37 584.500H158M37 604.500H158M37 624.500H158M37 644.500H158M37 664.500H158" stroke="#666"/>
<rect x="40.500" y="567.500" width="13" height="13" fill="#333" stroke="#555"/>
<rect x="40.500" y="587.500" width="13" height="13" fill="#333" stroke="#555"/>
<rect x="40.500" y="607.500" width="13" height="13" fill="#333" stroke="#555"/>
<rect x="40.500" y="627.500" width="13" height="13" fill="#fff" stroke="#666"/>
<rect x="40.500" y="647.500" width="13" height="13" fill="#1fb800" stroke="#555"/>
<rect x="40.500" y="667.500" width="13" height="13" fill="#ccc" stroke="#666"/>
<text x="59" y="579" textLength="20" lengthAdjust="spacingAndGlyphs" style="font-weight:bold;fill:#e0455a">3.6</text>
<text x="91" y="579" textLength="24" lengthAdjust="spacingAndGlyphs" style="font-weight:bold">Pen</text>
<use href="#gear" transform="translate(148 575) scale(.72)" opacity=".8"/>
<text x="59" y="599" textLength="14" lengthAdjust="spacingAndGlyphs">15</text>
<text x="91" y="599" textLength="76" lengthAdjust="spacingAndGlyphs">Pen (Fade In)</text>
<text x="59" y="619" textLength="14" lengthAdjust="spacingAndGlyphs">10</text>
<text x="91" y="619" textLength="32" lengthAdjust="spacingAndGlyphs">Pencil</text>
<text x="59" y="639" textLength="18" lengthAdjust="spacingAndGlyphs">8.5</text>
<text x="91" y="639" textLength="33" lengthAdjust="spacingAndGlyphs">Eraser</text>
<text x="59" y="659" textLength="14" lengthAdjust="spacingAndGlyphs">15</text>
<text x="91" y="659" textLength="53" lengthAdjust="spacingAndGlyphs">Edge Pen</text>
<text x="59" y="679" textLength="14" lengthAdjust="spacingAndGlyphs">50</text>
<text x="91" y="679" textLength="44" lengthAdjust="spacingAndGlyphs">AirBrush</text>
</g>
<use href="#up" x="167" y="573"/><use href="#dn" x="167" y="668"/>
<rect x="159" y="581" width="18" height="18" fill="#cdcdcd"/>
<use href="#doc" x="52" y="691"/>
<g transform="translate(79 691)"><use href="#doc"/><rect x="-3" y="-2" width="3" height="3" fill="#555"/><rect y="1" width="3" height="3" fill="#222"/></g>
<g transform="translate(106 691)"><use href="#doc"/><text x="-3" y="4" style="font-size:9px">S</text></g>
<use href="#fold" x="133" y="692"/>
<text x="166" y="695" style="font-weight:bold;font-size:12px">»</text>

<!-- Navigator -->
<rect x="1150" y="78" width="216" height="630" fill="#f0f0f0"/>
<rect class="h" x="1150.500" y="80.500" width="216" height="17"/>
<text x="1154" y="94" textLength="47" lengthAdjust="spacingAndGlyphs">Navigator</text>
<use href="#rs" x="1337" y="84"/><use href="#xx" x="1353" y="85"/>
<g fill="none" stroke="#333" stroke-width="1.300">
<circle cx="1163" cy="114" r="5"/><path d="M1167 118L1172 123" stroke-width="2"/><path d="M1160.500 114H1165.500M1163 111.500V116.500"/>
<circle cx="1190" cy="114" r="5"/><path d="M1194 118L1199 123" stroke-width="2"/><path d="M1187.500 114H1192.500"/>
<circle cx="1217" cy="114" r="5" stroke="#888"/><path d="M1221 118L1226 123" stroke="#888" stroke-width="2"/>
<path d="M1249 119A6 6 0 1 1 1255 121" stroke-width="2"/>
<path d="M1309 119A6 6 0 1 0 1303 121" stroke-width="2"/>
</g>
<path d="M1246 111L1252 113L1246 117Z" fill="#333"/><path d="M1312 111L1306 113L1312 117Z" fill="#333"/>
<circle cx="1279" cy="116" r="7" fill="none" stroke="#aaa" stroke-width="3.500" stroke-dasharray="1.200 1.500"/>
<path d="M1236.500 106V125M1322.500 106V125" stroke="#d4d4d4"/>
<path d="M1337 112V124L1331 118Z" fill="none" stroke="#555"/><path d="M1339 112V124L1345 118Z" fill="#444"/><path d="M1333 110C1335 107 1341 107 1343 110" fill="none" stroke="#333" stroke-width="1.500"/>
<rect x="1150" y="130" width="216" height="60" fill="#9c9c9c"/>
<rect x="1221" y="130" width="75" height="60" fill="#fff"/>
<path d="M1243 139L1245 137L1247 138L1251 136L1252 146C1252 152 1258 150 1266 151C1272 152 1278 158 1279 164C1283 172 1290 174 1294 170C1296 165 1293 163 1291 165M1279 164C1280 172 1279 178 1281 185M1243 150C1241 158 1244 165 1247 170L1249 186M1256 170L1252 186M1272 165L1276 186M1246 145L1250 148" fill="none" stroke="#cfcfcf" stroke-width=".8"/>
<rect x="1240" y="142" width="7" height="4" fill="#e00010"/>

<!-- Layer -->
<rect class="h" x="1150.500" y="196.500" width="216" height="17"/>
<text x="1154" y="210" textLength="27" lengthAdjust="spacingAndGlyphs">Layer</text>
<use href="#rs" x="1337" y="200"/><use href="#xx" x="1353" y="201"/>
<text x="1156" y="235" textLength="37" lengthAdjust="spacingAndGlyphs">Opacity</text>
<rect x="1208.500" y="223.500" width="113" height="14" fill="url(#op)" stroke="#668"/>
<text x="1329" y="235" textLength="31" lengthAdjust="spacingAndGlyphs">100 %</text>
<text x="1156" y="259" textLength="40" lengthAdjust="spacingAndGlyphs">Blending</text>
<rect x="1212.500" y="245.500" width="147" height="18" fill="#dedede" stroke="#aaa"/>
<text x="1215" y="259" textLength="34" lengthAdjust="spacingAndGlyphs">Normal</text>
<path d="M1347 252H1356L1351.500 256.500Z" fill="#111"/>
<rect x="1156.500" y="272.500" width="12" height="12" fill="#fff" stroke="#333"/>
<text x="1173" y="283" textLength="65" lengthAdjust="spacingAndGlyphs">Protect Alpha</text>
<rect x="1250.500" y="272.500" width="12" height="12" fill="#fafafa" stroke="#ccc"/>
<text class="g" x="1267" y="283" textLength="37" lengthAdjust="spacingAndGlyphs">Clipping</text>
<rect x="1316.500" y="272.500" width="12" height="12" fill="#fff" stroke="#333"/>
<text x="1333" y="283" textLength="22" lengthAdjust="spacingAndGlyphs">Lock</text>
<rect x="1152" y="371" width="192" height="77" fill="#7f7f7f"/>
<rect x="1152.500" y="291.500" width="191" height="80" fill="#fff" stroke="#111"/>
<rect x="1172" y="332" width="171" height="39" fill="#bfdff8"/>
<path d="M1152 331.500H1344M1171.500 292V371" stroke="#111"/>
<circle cx="1162" cy="311" r="5" fill="#bbb"/><circle cx="1162" cy="351" r="5" fill="#bbb"/><circle cx="1162" cy="311" r="2.500" fill="#ccc"/><circle cx="1162" cy="351" r="2.500" fill="#ccc"/>
<rect x="1186.500" y="297.500" width="35" height="26" fill="url(#ck)" stroke="#888"/>
<rect x="1186.500" y="337.500" width="35" height="27" fill="url(#ck)" stroke="#888"/>
<text x="1238" y="316" textLength="37" lengthAdjust="spacingAndGlyphs">Layer1</text>
<text x="1238" y="356" textLength="45" lengthAdjust="spacingAndGlyphs" style="font-weight:bold">Layer2</text>
<use href="#gear" x="1331" y="352"/>
<use href="#up" x="1354" y="300" style="opacity:.4"/><use href="#dn" x="1354" y="440" style="opacity:.4"/>
<use href="#doc" x="1167" y="463"/><use href="#fold" x="1194" y="464"/>
<g transform="translate(1227 463)"><use href="#doc" transform="translate(2 2) scale(.85)"/><use href="#doc" transform="translate(-2 -1) scale(.85)"/></g>
<path d="M1254 456V465M1250 462L1254 466L1258 462M1248 470L1260 470L1263 466H1258M1247 464H1250" fill="none" stroke="#666" stroke-width="1.200"/>
<path d="M1281 459H1293M1283 459L1284 470H1290L1291 459M1285 459V457H1289V459" fill="none" stroke="#333" stroke-width="1.300"/>
<path d="M1210.500 453V473M1270.500 453V473" stroke="#d4d4d4"/>

<!-- Brush Size -->
<rect class="h" x="1150.500" y="486.500" width="216" height="17"/>
<text x="1154" y="500" textLength="49" lengthAdjust="spacingAndGlyphs">Brush Size</text>
<use href="#rs" x="1337" y="491"/><use href="#xx" x="1353" y="492"/>
<g fill="#fff">
<rect x="1151" y="507" width="38" height="48"/><rect x="1191" y="507" width="38" height="48"/><rect x="1231" y="507" width="38" height="48"/><rect x="1271" y="507" width="38" height="48"/>
<rect x="1151" y="557" width="38" height="48"/><rect x="1191" y="557" width="38" height="48"/><rect x="1231" y="557" width="38" height="48"/><rect x="1271" y="557" width="38" height="48"/>
<rect x="1151" y="607" width="38" height="48"/><rect x="1191" y="607" width="38" height="48"/><rect x="1231" y="607" width="38" height="48"/><rect x="1271" y="607" width="38" height="48"/>
<rect x="1151" y="657" width="38" height="48"/><rect x="1191" y="657" width="38" height="48"/><rect x="1231" y="657" width="38" height="48"/><rect x="1271" y="657" width="38" height="48"/>
<rect x="1151" y="707" width="38" height="1"/><rect x="1191" y="707" width="38" height="1"/><rect x="1231" y="707" width="38" height="1"/><rect x="1271" y="707" width="38" height="1"/>
</g>
<circle cx="1170" cy="526" r=".5" fill="#eee"/><circle cx="1210" cy="526" r=".6" fill="#e4e4e4"/><circle cx="1250" cy="526" r=".8" fill="#ccc"/><circle cx="1290" cy="526" r="1" fill="#aaa"/>
<g fill="#222">
<circle cx="1170" cy="576" r="1"/><circle cx="1210" cy="576" r="1.500"/><circle cx="1250" cy="576" r="2"/><circle cx="1290" cy="576" r="2.500"/>
<circle cx="1170" cy="626" r="3.500"/><circle cx="1210" cy="626" r="5"/><circle cx="1250" cy="626" r="6"/><circle cx="1290" cy="626" r="7.500"/>
<circle cx="1170" cy="676" r="10"/><circle cx="1210" cy="676" r="12.500"/><circle cx="1250" cy="676" r="14"/><circle cx="1290" cy="676" r="14"/>
</g>
<g text-anchor="middle">
<text class="mn" x="1170" y="553">0.5</text><text class="mn" x="1210" y="553">0.7</text><text class="mn" x="1250" y="553">1</text><text class="mn" x="1290" y="553">1.5</text>
<text class="mn" x="1170" y="603">2</text><text class="mn" x="1210" y="603">3</text><text class="mn" x="1250" y="603">4</text><text class="mn" x="1290" y="603">5</text>
<text class="mn" x="1170" y="653">7</text><text class="mn" x="1210" y="653">10</text><text class="mn" x="1250" y="653">12</text><text class="mn" x="1290" y="653">15</text>
<text class="mn" x="1170" y="703">20</text><text class="mn" x="1210" y="703">25</text><text class="mn" x="1250" y="703">30</text><text class="mn" x="1290" y="703">40</text>
</g>
<path d="M1346.500 506V708" stroke="#fff"/>
<use href="#up" x="1355" y="515"/><use href="#dn" x="1355" y="699"/>
<rect x="1347" y="523" width="18" height="96" fill="#cdcdcd"/>

<!-- status -->
<rect y="708" width="1366" height="20" fill="#f0f0f0"/>
<rect y="727" width="1366" height="1" fill="#cfcfcf"/>
<text x="6" y="723" textLength="73" lengthAdjust="spacingAndGlyphs">603 * 479 pixel</text>
<text x="90" y="723" textLength="57" lengthAdjust="spacingAndGlyphs">(2.6 * 2cm)</text>
<text x="155" y="723" textLength="38" lengthAdjust="spacingAndGlyphs">600 dpi</text>
<text x="202" y="723" textLength="37" lengthAdjust="spacingAndGlyphs">1600 %</text>
<text x="249" y="723" textLength="54" lengthAdjust="spacingAndGlyphs">( 201, 107 )</text>
<text x="313" y="723" textLength="545" lengthAdjust="spacingAndGlyphs">Draw a straight line by holding down Shift, Change a brush size by holding down Ctrl, Alt, and dragging</text>

<!-- taskbar -->
<rect y="728" width="1366" height="40" fill="#1e1f10"/>
<path d="M16 742L23 741V748H16ZM24 741L32 739.500V748H24ZM16 749H23V756L16 755ZM24 749H32V757.500L24 756.500Z" fill="#fff"/>
<rect x="48" y="729" width="344" height="39" fill="#f0f0f0"/>
<circle cx="68" cy="749" r="9" fill="none" stroke="#1c1c1c" stroke-width="2.400"/>
<text x="88" y="754" textLength="128" lengthAdjust="spacingAndGlyphs" style="font-size:15px;fill:#444">Type here to search</text>
<rect x="368" y="741" width="7" height="12" rx="3" fill="none" stroke="#333" stroke-width="1.200"/><path d="M366 749C366 757 377 757 377 749M371.500 755V757M368 757.500H375" fill="none" stroke="#333"/>
<path d="M408.500 741V744M408.500 741H416M421 741H424V744H421ZM408.500 745.500H420.500V752.500H408.500ZM408.500 756H416M420 756H424M424 746V752" fill="none" stroke="#fff" stroke-width="1.100"/>
<path d="M459 750H476C476 742 470 739 466 739C461 739 458 744 458 750C458 756 462 760 467 760C471 760 474 758 476 756" fill="none" stroke="#0f78d4" stroke-width="4"/>
<path d="M506 739H525V759H506Z" fill="#f5d76e"/><path d="M506 739H513L515 742H525V745H506Z" fill="#e5b84a"/><path d="M511 759V753C511 749 520 749 520 753V759H517V754H514V759Z" fill="#3a9bd9"/>
<path d="M555 743H577V761Q577 762 576 762H556Q555 762 555 761Z" fill="#fff"/><path d="M561 743C561 736 571 736 571 743" fill="none" stroke="#fff" stroke-width="1.400"/>
<rect x="561" y="746" width="4.500" height="4.500" fill="#f25022"/><rect x="566.500" y="746" width="4.500" height="4.500" fill="#7fba00"/><rect x="561" y="751.500" width="4.500" height="4.500" fill="#00a4ef"/><rect x="566.500" y="751.500" width="4.500" height="4.500" fill="#ffb900"/>
<path d="M604 741L614 737L624 741V752C624 757 618 760 614 763C610 760 604 757 604 752Z" fill="#b3262c"/><path d="M609 744L614 749L619 744V753L614 757L609 753Z" fill="#1e1f10"/>
<path d="M652 746L663 738L674 746V759H652Z" fill="#fff"/><path d="M652 746L663 754L674 746" fill="#1e1f10" stroke="#1e1f10"/>
<g fill="none" stroke-width="6.500" transform="rotate(-90 712 749)">
<circle cx="712" cy="749" r="8" stroke="#e0442f"/>
<circle cx="712" cy="749" r="8" stroke="#f6c22c" stroke-dasharray="16.700 33.500" transform="rotate(120 712 749)"/>
<circle cx="712" cy="749" r="8" stroke="#3ca74c" stroke-dasharray="16.700 33.500" transform="rotate(210 712 749)"/>
</g>
<circle cx="712" cy="749" r="5.500" fill="#fff"/><circle cx="712" cy="749" r="4" fill="#4a8cf0"/>
<circle cx="761" cy="749" r="11" fill="#17467e"/><path d="M750 752L760 757C761 754 758 750 755 750Z" fill="#fff"/><circle cx="766" cy="745" r="4" fill="none" stroke="#fff" stroke-width="2"/><path d="M760 755L764 749" stroke="#fff" stroke-width="2"/>
<circle cx="810" cy="749" r="5.500" fill="none" stroke="#fff" stroke-width="3"/><circle cx="810" cy="749" r="8" fill="none" stroke="#fff" stroke-width="3" stroke-dasharray="3.300 3"/>
<rect x="835" y="728" width="48" height="40" fill="#4e4f44"/>
<use href="#lg" transform="translate(859 750) scale(.83)"/>
<rect x="692" y="766" width="40" height="2" fill="#78bdf0"/>
<rect x="835" y="766" width="48" height="2" fill="#78bdf0"/>
<g fill="none" stroke="#fff" stroke-width="1.100">
<circle cx="1096" cy="743.500" r="3"/><path d="M1091 753C1091 748 1101 748 1101 751"/><circle cx="1090" cy="749" r="2.700"/><path d="M1086 756C1086 751 1094 751 1094 756"/>
<path d="M1124 752L1129.500 746.500L1135 752" stroke-width="1.300"/>
<rect x="1170.500" y="744.500" width="13" height="8"/><path d="M1185 747V750"/>
<path d="M1194.500 746V752H1197L1201 755V743L1197 746Z"/><path d="M1203 745C1205 747 1205 751 1203 753" /><path d="M1206 743C1209 746 1209 752 1206 755" stroke="#999"/>
</g>
<rect x="1172" y="746" width="4" height="5" fill="#fff"/>
<path d="M1146 753C1145 748 1151 747 1152 748C1154 743 1160 745 1160 749C1163 749 1163 753 1160 753Z" fill="#fff"/>
<text x="1219" y="753" textLength="23" lengthAdjust="spacingAndGlyphs" style="fill:#fff;font-size:12px">ENG</text>
<text x="1261" y="743" textLength="42" lengthAdjust="spacingAndGlyphs" style="fill:#fff;font-size:12px">9:57 PM</text>
<text x="1258" y="761" textLength="46" lengthAdjust="spacingAndGlyphs" style="fill:#fff;font-size:12px">5/7/2019</text>
<path d="M1326 741H1341V752H1333L1330 755V752H1326Z" fill="#fff"/><path d="M1329 744H1339M1329 747H1339M1329 750H1335" stroke="#333"/>
<circle cx="1340" cy="756" r="7.500" fill="#333" stroke="#bbb"/>
<text x="1337" y="760" style="fill:#fff;font-size:11px;font-weight:bold">2</text>
<rect x="1361" y="728" width="1" height="40" fill="#555"/>
</svg>
</body></html>
